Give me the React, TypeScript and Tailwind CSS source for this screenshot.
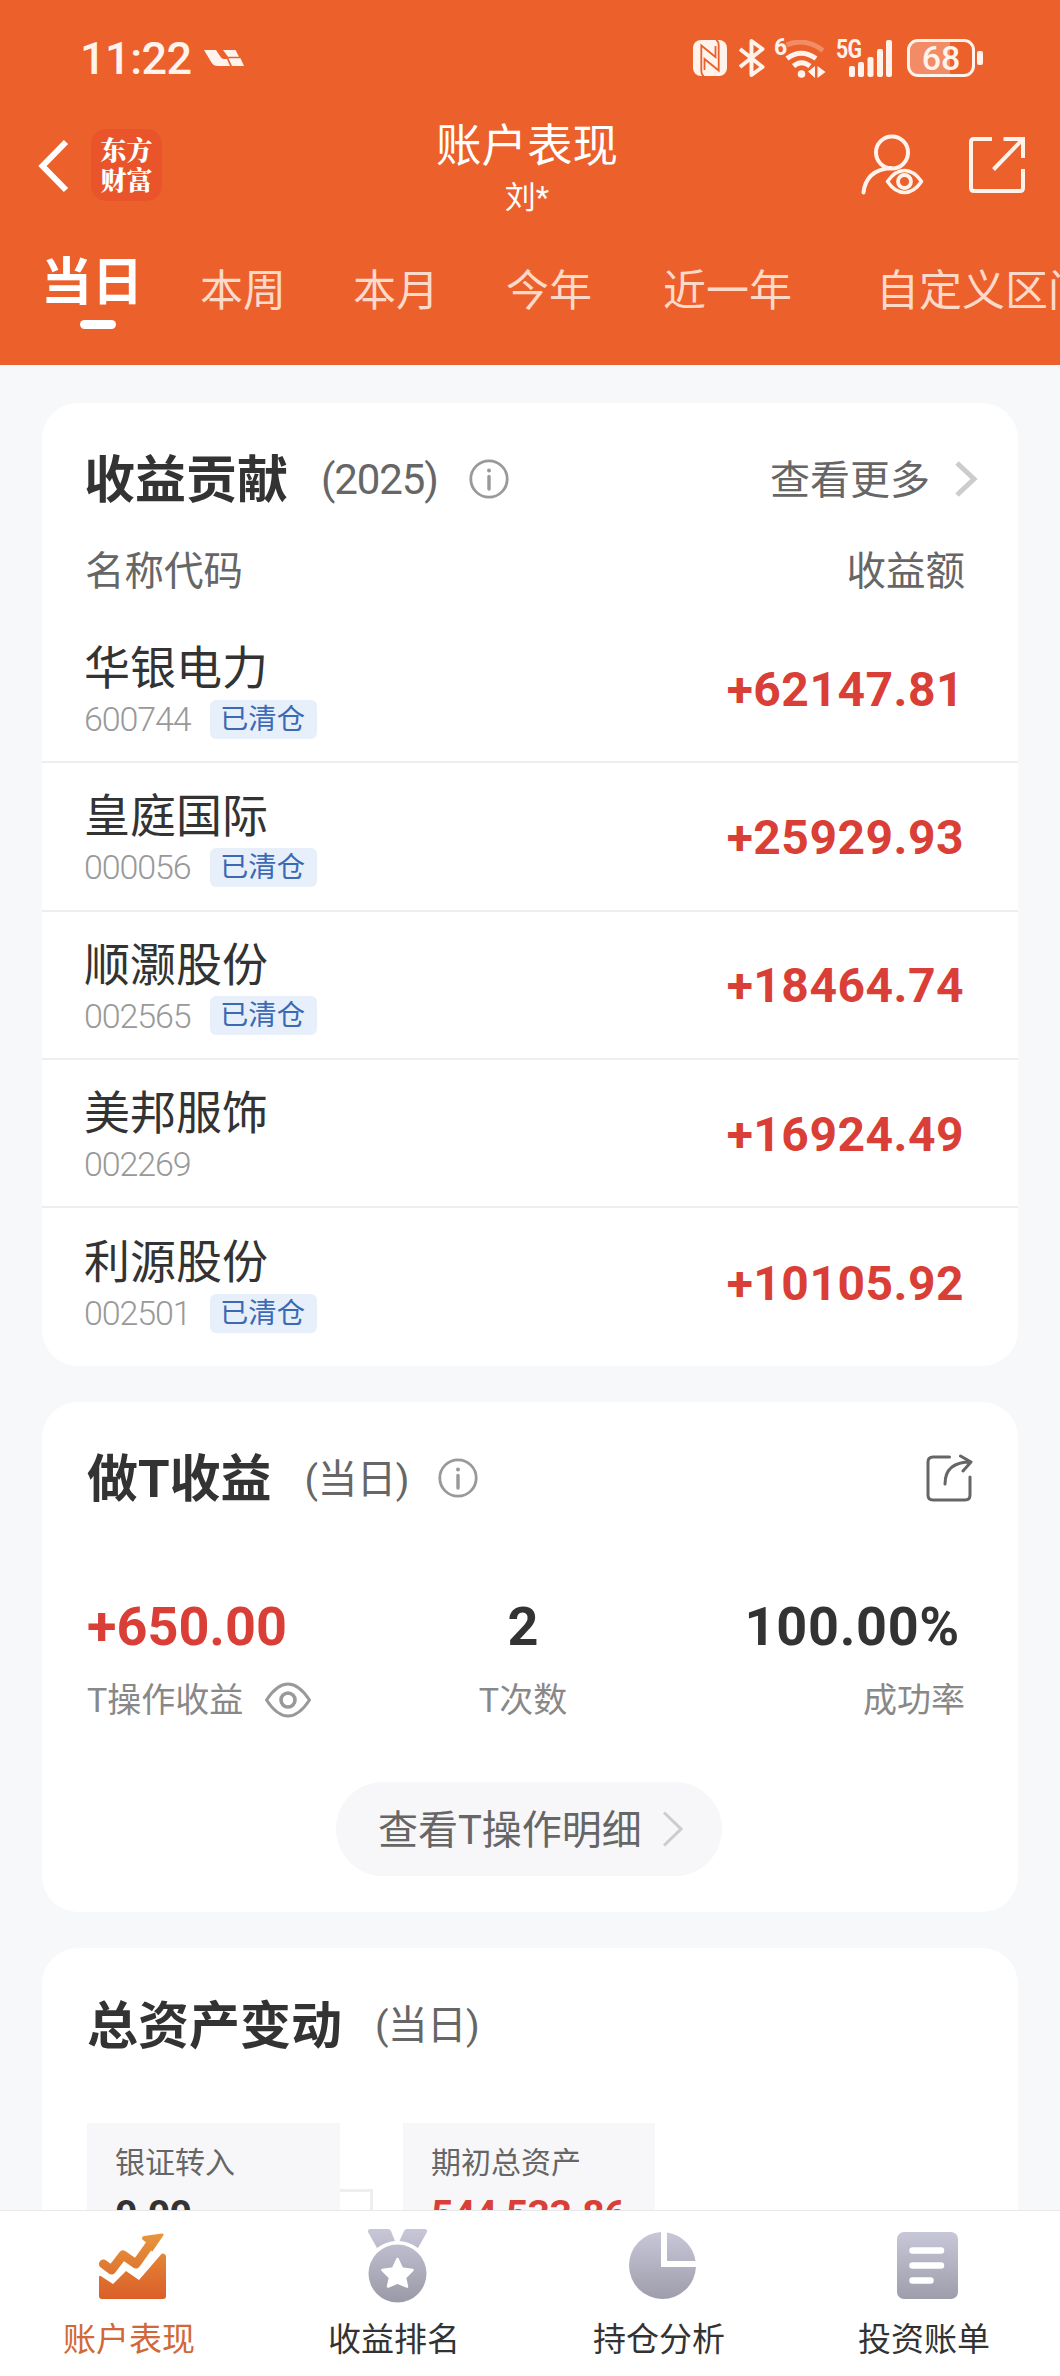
import { useState } from "react";
import clsx from "clsx";

const periods = [
  { label: "本周", pos: "ml-[57px]" },
  { label: "本月", pos: "ml-[67px]" },
  { label: "今年", pos: "ml-[67px]" },
  { label: "近一年", pos: "ml-[71px]" },
  { label: "自定义区间", pos: "ml-[84px]" },
];

const stocks = [
  { name: "华银电力", code: "600744", cleared: true, profit: "+62147.81" },
  { name: "皇庭国际", code: "000056", cleared: true, profit: "+25929.93" },
  { name: "顺灏股份", code: "002565", cleared: true, profit: "+18464.74" },
  { name: "美邦服饰", code: "002269", cleared: false, profit: "+16924.49" },
  { name: "利源股份", code: "002501", cleared: true, profit: "+10105.92" },
];

const InfoIcon = () => (
  <svg width="40" height="40" viewBox="0 0 40 40" fill="none" stroke="#999" strokeWidth="2.8">
    <circle cx="20" cy="20" r="18.2" />
    <circle cx="20" cy="11.5" r="2" fill="#999" stroke="none" />
    <path d="M20 17.5V30" strokeWidth="3.4" strokeLinecap="round" />
  </svg>
);

const StatusBar = () => (
  <div className="flex h-[116px] items-center text-[#fff3ec]">
    <span className="ml-[80px] w-[112px] text-[45px] font-medium leading-[45px] tracking-[-0.5px]">11:22</span>
    <svg className="ml-[12px]" width="40" height="16" viewBox="0 0 40 16" fill="currentColor">
      <path d="M0 0H12L17 7.500Q18.500 9 20.500 9H23L26 16H14Q9.500 16 7.500 12.500z" />
      <path d="M19 0H31.500L35 6.800H24z" />
      <path d="M24.500 8.300H36.500L40 16H28z" />
    </svg>
    <div className="ml-[449px] flex items-center">
      {/* NFC */}
      <svg width="34" height="36" viewBox="0 0 34 36">
        <rect width="34" height="36" rx="8" fill="currentColor" />
        <path d="M11 36Q8.300 35 8.300 31V5.500L22.500 17V6" fill="none" stroke="#EC602C" strokeWidth="1.800" />
        <path d="M23 0Q25.700 1 25.700 5V30.500L11.500 19V30" fill="none" stroke="#EC602C" strokeWidth="1.800" />
      </svg>
      {/* Bluetooth */}
      <svg className="ml-[12px]" width="26" height="38" viewBox="0 0 26 38" fill="none" stroke="currentColor" strokeWidth="4" strokeLinejoin="round">
        <path d="M1 10L23.500 28 12.500 36V2L23.500 10 1 28" />
      </svg>
      {/* Wifi 6 */}
      <div className="relative ml-[9px] h-[40px] w-[52px]">
        <span className="absolute left-0 top-0 text-[23px] font-bold leading-[20px] tracking-[-1px]">6</span>
        <svg className="absolute left-[11px] top-[2px]" width="42" height="38" viewBox="0 0 42 38" fill="none" stroke="currentColor" strokeWidth="5">
          <path d="M1.500 5Q20 -3 38 10.500" opacity=".3" />
          <path d="M2 18.500Q16 8 31 18.500" />
          <path d="M8.500 26Q16.500 19.500 25 26" />
          <circle cx="16.500" cy="34" r="3.800" fill="currentColor" stroke="none" />
          <path d="M30 26v12l-7-6.500zM32.500 26v12l8-6z" fill="currentColor" stroke="none" />
        </svg>
      </div>
      {/* 5G signal */}
      <div className="relative ml-[10px] h-[40px] w-[57px]">
        <span className="absolute left-0 top-0 origin-left scale-x-[0.82] text-[26px] font-bold leading-[22px] tracking-[-1px]">5G</span>
        <svg className="absolute left-[13px] top-[2px]" width="44" height="37" viewBox="0 0 44 37" fill="currentColor">
          <rect x="0" y="26" width="6" height="11" rx="2" />
          <rect x="9" y="22" width="6" height="15" rx="2" />
          <rect x="18.500" y="17" width="6" height="20" rx="2" />
          <rect x="28" y="9" width="6" height="28" rx="2" />
          <rect x="37" y="0" width="6" height="37" rx="2" />
        </svg>
      </div>
      {/* Battery */}
      <div className="ml-[14px] flex items-center">
        <div className="flex h-[38px] w-[68px] items-center justify-center rounded-[11px] border-[3px] border-[#fff3ec] bg-linear-to-r from-[#f18c66] from-65% to-[#ec602c] to-65% text-[34px] font-medium leading-none">
          68
        </div>
        <div className="ml-[2px] h-[14px] w-[6px] rounded-[2px] bg-[#fff3ec]" />
      </div>
    </div>
  </div>
);

const TopBar = () => (
  <div className="grid h-[112px] grid-cols-[436px_182px_1fr]">
    <div className="flex">
      <svg className="ml-[38px] mt-[23px]" width="32" height="54" viewBox="0 0 32 54" fill="none" stroke="#fff" strokeWidth="6">
        <path d="M28 3L4.500 27 28 51" />
      </svg>
      <div className="ml-[21px] mt-[13px] flex h-[72px] w-[71px] flex-col items-center justify-center rounded-[15px] bg-[#ea542a] pb-[2px] font-['Noto_Serif_CJK_SC','Noto_Sans_CJK_SC',sans-serif] text-[26px] font-black leading-[30px] text-white">
        东方
        <br />
        财富
      </div>
    </div>
    <div className="flex flex-col items-center pt-[3px] text-white">
      <span className="whitespace-nowrap text-[45.5px] leading-[56px]">账户表现</span>
      <span className="text-[31px] leading-[46px]">刘*</span>
    </div>
    <div className="flex text-[#fff3ec]">
      <svg className="ml-[242px] mt-[18px]" width="64" height="64" viewBox="0 0 64 64" fill="none" stroke="currentColor" strokeWidth="4" strokeLinecap="round">
        <circle cx="32" cy="18.500" r="16" />
        <path d="M3.500 58.500Q6 36 31 34" />
        <path d="M27.500 47.500Q35 36.500 44.500 36.500T61.500 47.500Q54 58.500 44.500 58.500T27.500 47.500Z" strokeWidth="3.600" strokeLinejoin="round" />
        <circle cx="44.500" cy="47.500" r="6.500" strokeWidth="3.800" />
      </svg>
      <svg className="ml-[45px] mt-[20px]" width="57" height="58" viewBox="0 0 57 58" fill="none" stroke="currentColor" strokeWidth="4">
        <path d="M23 3H5Q2 3 2 6V52Q2 55 5 55H51Q54 55 54 52V33M34.500 3H54V22M54 3L24.500 33.500" />
      </svg>
    </div>
  </div>
);

const PeriodTabs = () => (
  <div className="flex h-[137px] whitespace-nowrap text-[43px] leading-[50px] text-[#fdd9c9]">
    <div className="ml-[41px] flex w-[102px] flex-col items-center pt-[29px]">
      <span className="text-[51px] font-bold leading-[52px] text-white">当日</span>
      <span className="ml-[12px] mt-[11px] h-[9px] w-[36px] rounded-full bg-white" />
    </div>
    {periods.map((p) => (
      <span key={p.label} className={clsx("shrink-0 pt-[38px]", p.pos)}>
        {p.label}
      </span>
    ))}
  </div>
);

const ProfitCard = () => (
  <section className="h-[963px] shrink-0 rounded-[36px] bg-white">
    <div className="flex h-[152px] items-center pl-[42px] pr-[40px] text-[#666]">
      <h2 className="pt-[3px] text-[51px] font-bold text-[#333]">收益贡献</h2>
      <span className="ml-[33px] pt-[2px] text-[42px] tracking-[-1.1px]">(2025)</span>
      <span className="ml-[31px]"><InfoIcon /></span>
      <span className="ml-auto pt-[3px] text-[40px]">查看更多</span>
      <svg className="ml-[25px]" width="23" height="36" viewBox="0 0 23 36" fill="none" stroke="#ccc" strokeWidth="5">
        <path d="M2 2L19 18 2 34" />
      </svg>
    </div>
    <div className="flex h-[60px] items-center justify-between pl-[43px] pr-[53px] pb-[30px] pt-[4px] text-[39.5px] leading-none text-[#666]">
      <span>名称代码</span>
      <span>收益额</span>
    </div>
    {stocks.map((s, i) => (
      <div
        key={s.code}
        className={clsx("flex h-[148.300px] items-center justify-between pl-[42px] pr-[54px]", i < stocks.length - 1 && "border-b-2 border-[#eee]")}
      >
        <div className="pt-[3px]">
          <div className="text-[46px] leading-[56px] text-[#333]">{s.name}</div>
          <div className="mt-[3px] flex h-[40px] items-center">
            <span className="w-[126px] text-[34px] font-light tracking-[-1.100px] text-[#999]">{s.code}</span>
            {s.cleared && (
              <span className="flex h-[39px] w-[107px] justify-center rounded-[6px] bg-[#e7f0fa] pr-[2px] text-[28.300px] leading-[39px] text-[#3c69b4]">已清仓</span>
            )}
          </div>
        </div>
        <span className="pt-[3px] text-[48px] font-bold tracking-[0.5px] text-[#d93f36]">{s.profit}</span>
      </div>
    ))}
  </section>
);

const TradeCard = () => (
  <section className="h-[510px] shrink-0 rounded-[36px] bg-white pl-[45px] pr-[45px]">
    <div className="flex h-[152px] items-center text-[#666]">
      <h2 className="pt-[3px] text-[51px] font-bold text-[#333]">做T收益</h2>
      <span className="ml-[33px] pt-[3px] text-[39.5px] tracking-[-0.5px]">(当日)</span>
      <span className="ml-[29px]"><InfoIcon /></span>
      <svg className="ml-auto" width="47" height="48" viewBox="0 0 47 48" fill="none" stroke="#666" strokeWidth="3" strokeLinecap="round" strokeLinejoin="round">
        <path d="M23.500 3H7Q2 3 2 8V41Q2 46 7 46H39Q44 46 44 41V23" />
        <path d="M19 30Q19 8 44.500 8M34.500 2L45 8 37 17" />
      </svg>
    </div>
    <div className="mt-[41px] grid grid-cols-3 pr-[8px]">
      <div>
        <div className="text-[54px] font-bold leading-[64px] text-[#d93f36]">+650.00</div>
        <div className="mt-[16px] flex items-center text-[34px] leading-[50px] text-[#888]">
          T操作收益
          <svg className="ml-[22px]" width="46" height="36" viewBox="0 0 46 36" fill="none" stroke="#999" strokeWidth="3" strokeLinejoin="round">
            <path d="M1.500 18Q12 2 23 2T44.500 18Q34 34 23 34T1.500 18Z" />
            <circle cx="23" cy="18" r="7" strokeWidth="3.600" />
          </svg>
        </div>
      </div>
      <div className="pr-[6px] text-center">
        <div className="text-[54px] font-bold leading-[64px] text-[#333]">2</div>
        <div className="mt-[16px] text-[34px] leading-[50px] text-[#888]">T次数</div>
      </div>
      <div className="text-right">
        <div className="pr-[5px] text-[54px] font-bold leading-[64px] tracking-[0.700px] text-[#333]">100.00%</div>
        <div className="mt-[16px] text-[34px] leading-[50px] text-[#888]">成功率</div>
      </div>
    </div>
    <button className="ml-[249px] mt-[57px] flex h-[94px] w-[386px] items-center rounded-full bg-[#f7f7f9] pl-[42px] text-[40px] text-[#666]">
      <span className="pt-[3px]">查看T操作明细</span>
      <svg className="ml-[21px]" width="20" height="36" viewBox="0 0 20 36" fill="none" stroke="#ccc" strokeWidth="3">
        <path d="M1 1.500L18 18 1 34.500" />
      </svg>
    </button>
  </section>
);

const AssetCard = () => (
  <section className="h-[500px] shrink-0 rounded-[36px] bg-white pl-[45px]">
    <div className="flex h-[152px] items-center text-[#666]">
      <h2 className="pt-[4px] text-[51px] font-bold text-[#333]">总资产变动</h2>
      <span className="ml-[33px] pt-[4px] text-[39.5px] tracking-[-0.5px]">(当日)</span>
    </div>
    <div className="mt-[23px] flex">
      <div className="h-[160px] w-[253px] bg-[#f7f7f9] pl-[28px] pt-[18px]">
        <div className="text-[30px] leading-[44px] text-[#666]">银证转入</div>
        <div className="mt-[6px] text-[39px] font-bold leading-[48px] tracking-[-0.5px] text-[#333]">0.00</div>
      </div>
      <div className="mt-[66px] h-[94px] w-[33px] border-r-[3px] border-t-[3px] border-[#eee]" />
      <div className="ml-[30px] h-[160px] w-[252px] bg-[#f7f7f9] pl-[28px] pt-[18px]">
        <div className="text-[30px] leading-[44px] text-[#666]">期初总资产</div>
        <div className="mt-[6px] text-[39px] font-bold leading-[48px] tracking-[-0.5px] text-[#d93f36]">544,533.86</div>
      </div>
    </div>
  </section>
);

const TrendIcon = () => (
  <svg width="67" height="66" viewBox="0 0 67 66" fill="url(#warm)">
    <path d="M4.500 31L12.500 37 24 22 37 31 52 10" fill="none" stroke="url(#warm)" strokeWidth="9" strokeLinecap="round" strokeLinejoin="round" />
    <path d="M43 5Q43 3.500 45 3L63 .5Q65.500 .3 64 3L53 19 49 11 44 7Q43 6.500 43 5z" />
    <path d="M0 44q.500-2 2.500-.5L14 51 27 38 40 47 62 21.500q2-2 4 0 1 1 1 2V63q0 3-3 3H3q-3 0-3-3z" />
  </svg>
);

const MedalIcon = () => (
  <svg width="59" height="74" viewBox="0 0 59 74" fill="url(#cool)">
    <path d="M0 2Q0 0 2 0H20Q22 0 23 2L27 12Q17 13 9 19L0 3zM59 2Q59 0 57 0H39Q37 0 36 2L31.500 12Q42 13 50 19L59 3z" />
    <circle cx="29.500" cy="44.500" r="29" />
    <path d="M29.500 30L34 39.500 44.500 41 37 48.500 39 57.500 29.500 53.500 20 57.500 22 48.500 14.500 41 25 39.500z" fill="#fff" stroke="#fff" strokeWidth="2.500" strokeLinejoin="round" />
  </svg>
);

const PieIcon = () => (
  <svg width="67" height="67" viewBox="0 0 67 67" fill="url(#cool)">
    <path d="M32 0A33.500 33.500 0 1 0 67 35H32z" />
    <path d="M38 .5A33.500 33.500 0 0 1 66.500 29H38z" />
  </svg>
);

const BillIcon = () => (
  <svg width="61" height="67" viewBox="0 0 61 67" fill="url(#cool)">
    <rect width="61" height="67" rx="7" />
    <path d="M15.500 18.500H44M15.500 33.500H44M15.500 48.500H33.500" stroke="#fff" strokeWidth="6.500" strokeLinecap="round" />
  </svg>
);

const tabs = [
  { label: "账户表现", icon: <TrendIcon /> },
  { label: "收益排名", icon: <MedalIcon /> },
  { label: "持仓分析", icon: <PieIcon /> },
  { label: "投资账单", icon: <BillIcon /> },
];

const BottomNav = () => {
  const [active, setActive] = useState(0);

  return (
    <nav className="grid h-[166px] shrink-0 grid-cols-4 border-t border-[#e8e8e8] bg-white">
      <svg className="absolute" width="0" height="0">
        <linearGradient id="warm" gradientUnits="userSpaceOnUse" x1="0" y1="0" x2="0" y2="66">
          <stop stopColor="#e8963c" />
          <stop offset="1" stopColor="#da5e28" />
        </linearGradient>
        <linearGradient id="cool" gradientUnits="userSpaceOnUse" x1="0" y1="0" x2="0" y2="70">
          <stop stopColor="#c8c7d8" />
          <stop offset="1" stopColor="#9c9ba9" />
        </linearGradient>
      </svg>
      {tabs.map((t, i) => (
        <button key={t.label} onClick={() => setActive(i)} className="flex flex-col items-center pt-[16px]">
          <span className="flex h-[77px] items-center">{t.icon}</span>
          <span className={clsx("mt-[12px] pr-[7px] text-[33px] leading-[48px]", i === active ? "text-[#d0683a]" : "text-[#333]")}>
            {t.label}
          </span>
        </button>
      ))}
    </nav>
  );
};

const App = () => (
  <div className="flex h-[2376px] w-[1060px] flex-col overflow-hidden bg-[#f7f8fa] font-['Roboto','Noto_Sans_CJK_SC',sans-serif] leading-none">
    <header className="h-[365px] shrink-0 overflow-hidden bg-[#ec602c]">
      <StatusBar />
      <TopBar />
      <PeriodTabs />
    </header>
    <main className="flex min-h-0 flex-1 flex-col gap-[36px] overflow-hidden px-[42px] pt-[38px]">
      <ProfitCard />
      <TradeCard />
      <AssetCard />
    </main>
    <BottomNav />
  </div>
);

export default App;
